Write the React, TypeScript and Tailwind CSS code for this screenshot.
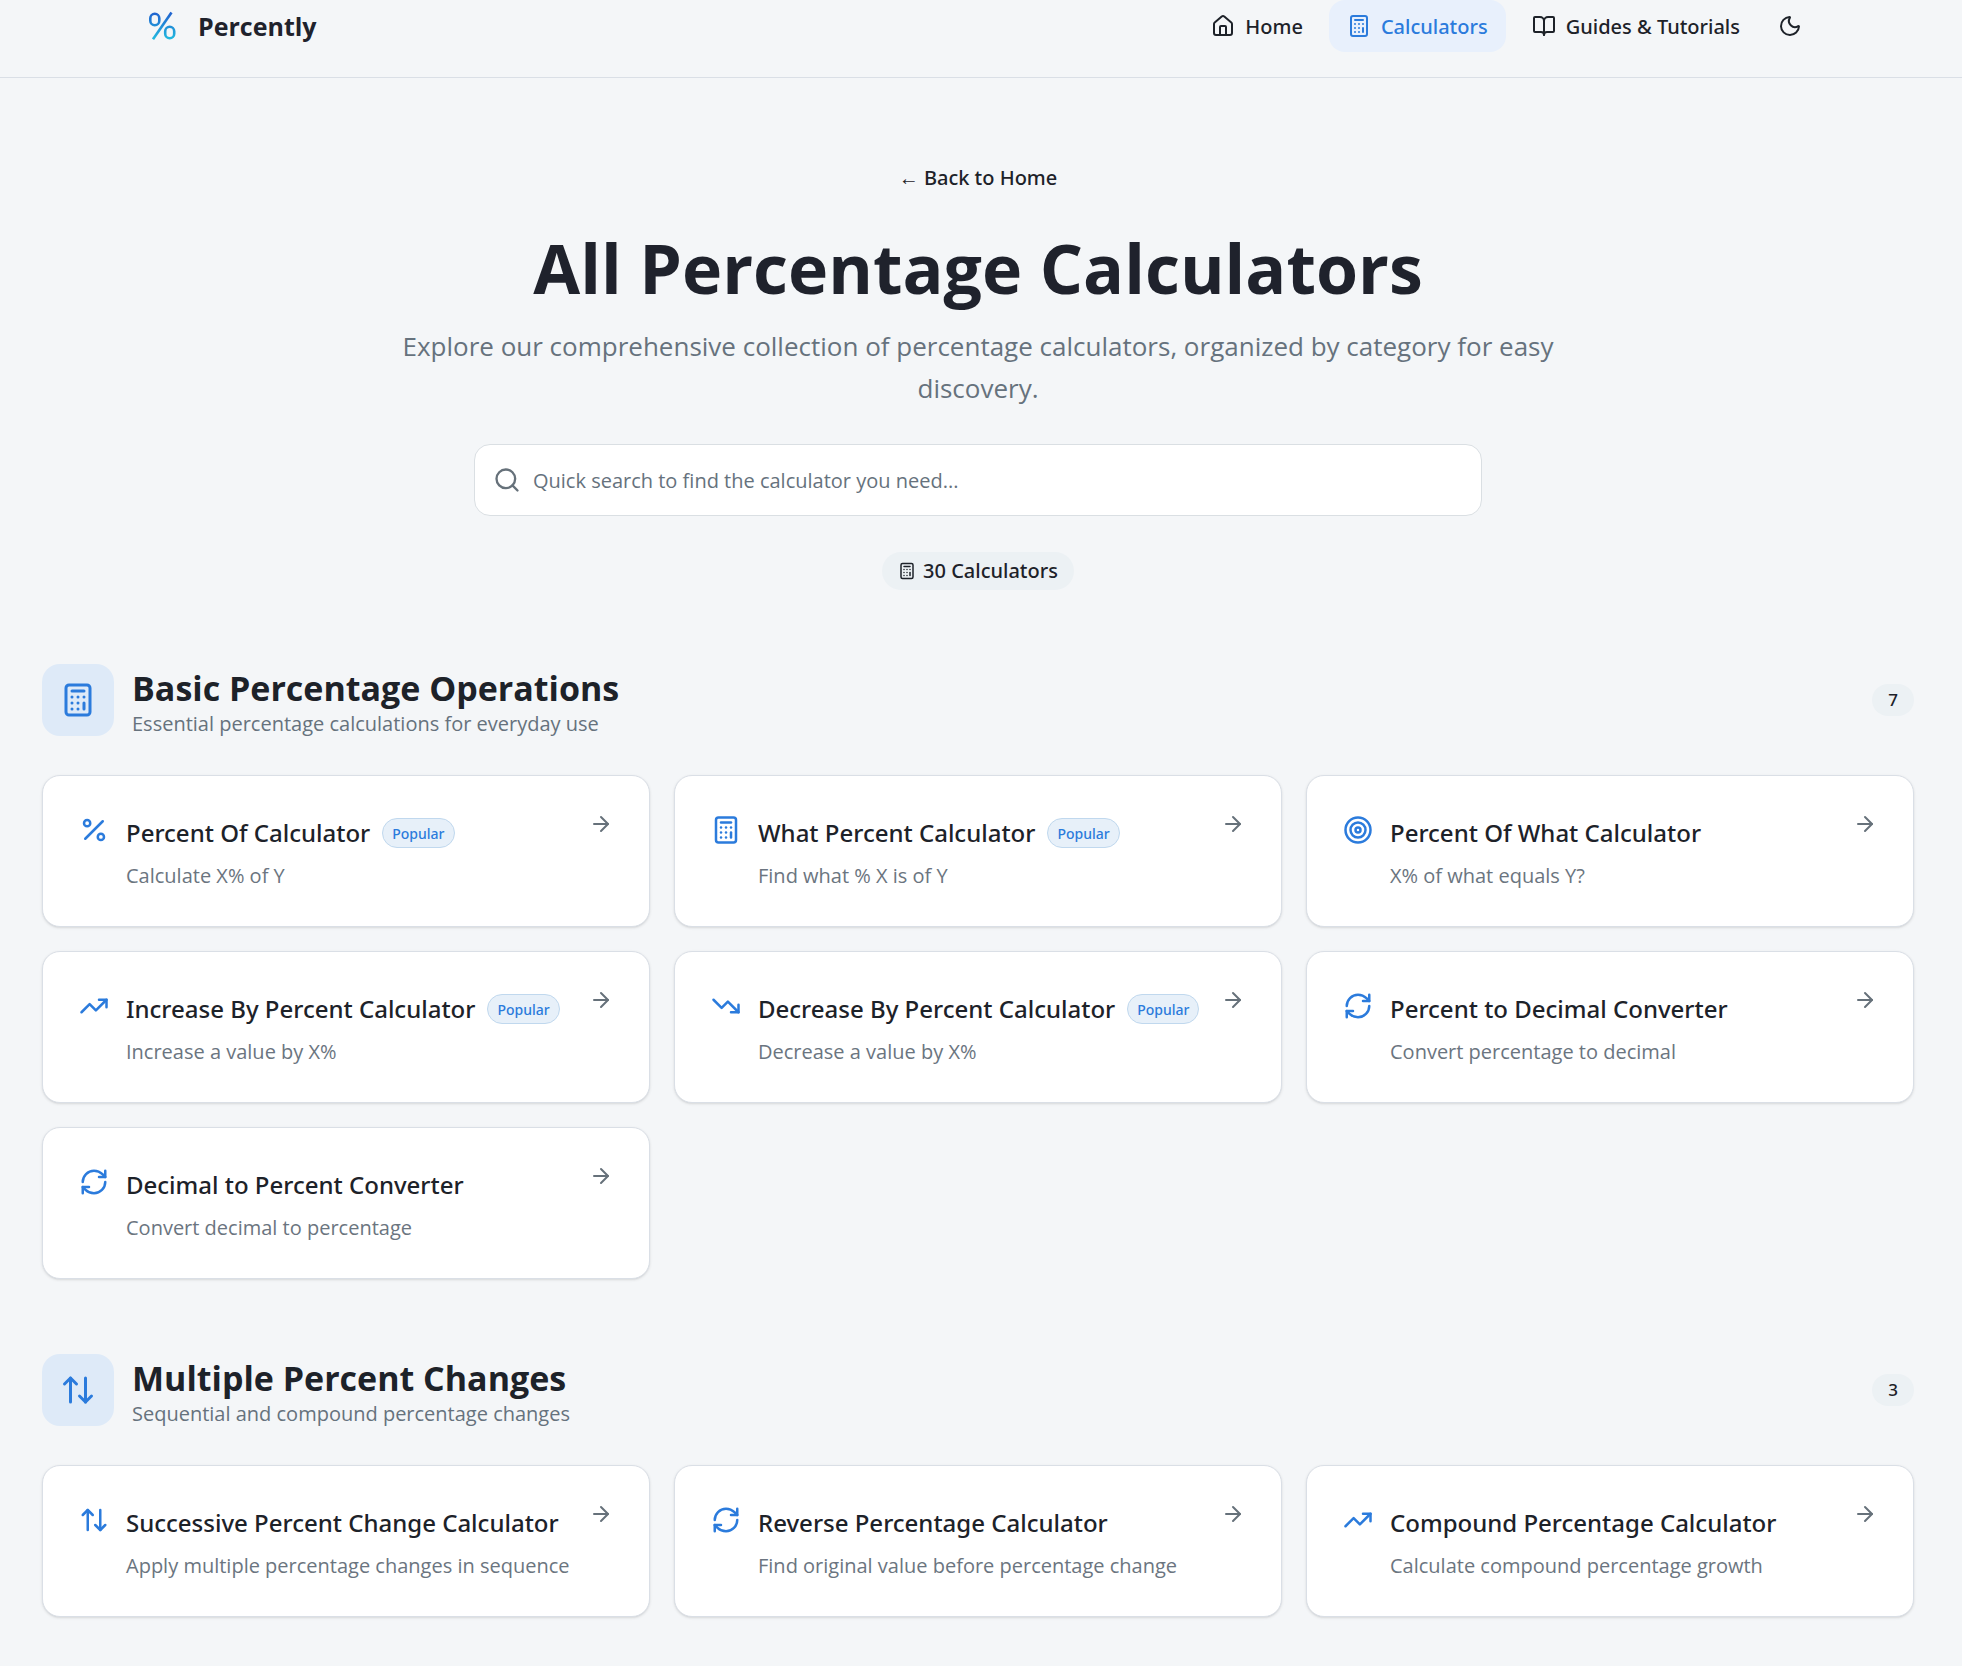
import {
    ArrowRight,
    ArrowUpDown,
    BookOpen,
    Calculator,
    House,
    Moon,
    Percent,
    RefreshCw,
    Search,
    Target,
    TrendingDown,
    TrendingUp,
    type LucideIcon,
} from 'lucide-react';

type Tool = {
    title: string;
    description: string;
    icon: LucideIcon;
    popular?: boolean;
};

type Category = {
    title: string;
    description: string;
    icon: LucideIcon;
    tools: Tool[];
};

const categories: Category[] = [
    {
        title: 'Basic Percentage Operations',
        description: 'Essential percentage calculations for everyday use',
        icon: Calculator,
        tools: [
            { title: 'Percent Of Calculator', description: 'Calculate X% of Y', icon: Percent, popular: true },
            { title: 'What Percent Calculator', description: 'Find what % X is of Y', icon: Calculator, popular: true },
            { title: 'Percent Of What Calculator', description: 'X% of what equals Y?', icon: Target },
            { title: 'Increase By Percent Calculator', description: 'Increase a value by X%', icon: TrendingUp, popular: true },
            { title: 'Decrease By Percent Calculator', description: 'Decrease a value by X%', icon: TrendingDown, popular: true },
            { title: 'Percent to Decimal Converter', description: 'Convert percentage to decimal', icon: RefreshCw },
            { title: 'Decimal to Percent Converter', description: 'Convert decimal to percentage', icon: RefreshCw },
        ],
    },
    {
        title: 'Multiple Percent Changes',
        description: 'Sequential and compound percentage changes',
        icon: ArrowUpDown,
        tools: [
            { title: 'Successive Percent Change Calculator', description: 'Apply multiple percentage changes in sequence', icon: ArrowUpDown },
            { title: 'Reverse Percentage Calculator', description: 'Find original value before percentage change', icon: RefreshCw },
            { title: 'Compound Percentage Calculator', description: 'Calculate compound percentage growth', icon: TrendingUp },
        ],
    },
];

const navItems = [
    { label: 'Home', icon: House, active: false },
    { label: 'Calculators', icon: Calculator, active: true },
    { label: 'Guides & Tutorials', icon: BookOpen, active: false },
];

function Logo() {
    return (
        <svg viewBox="0 0 40 40" className="h-10 w-10" fill="none" strokeWidth="2.6" strokeLinecap="butt">
            <defs>
                <linearGradient id="logo" x1="0" y1="6" x2="0" y2="34" gradientUnits="userSpaceOnUse">
                    <stop offset="0" stopColor="#2160cf" />
                    <stop offset="1" stopColor="#22bde0" />
                </linearGradient>
            </defs>
            <g stroke="url(#logo)">
                <rect x="8.3" y="7.8" width="9" height="11.4" rx="4.5" />
                <rect x="23.2" y="20.8" width="9" height="11.4" rx="4.5" />
                <path d="M29.5 6.5 11 33.2" />
            </g>
        </svg>
    );
}

function Header() {
    return (
        <header className="border-b border-[#dadfe6] pr-[6px] pb-[25px]">
            <div className="mx-auto flex max-w-[1672px] items-center justify-between">
                <a href="#" className="flex items-center gap-4">
                    <Logo />
                    <span className="pt-[2px] text-[25px] font-bold text-[#1f222c]">Percently</span>
                </a>

                <nav className="flex items-center gap-2 font-['Noto_Sans',sans-serif]">
                    {navItems.map(({ label, icon: Icon, active }) => (
                        <a
                            key={label}
                            href="#"
                            className={
                                active
                                    ? 'flex h-[52px] items-center gap-[10px] rounded-2xl bg-[#e8f0fc] px-[18px] text-[20px] font-medium text-[#2b7bdc]'
                                    : 'flex h-[52px] items-center gap-[10px] rounded-2xl px-[18px] text-[20px] font-medium text-[#1d2229]'
                            }
                        >
                            <Icon className="size-6" />
                            <span className="pt-[2px]">{label}</span>
                        </a>
                    ))}
                    <button type="button" aria-label="Toggle theme" className="flex size-12 items-center justify-center text-[#1d2229]">
                        <Moon className="size-6" />
                    </button>
                </nav>
            </div>
        </header>
    );
}

function Hero() {
    return (
        <section className="flex flex-col items-center text-center">
            <a href="#" className="font-['Noto_Sans',sans-serif] text-[20px] leading-[30px] font-medium">
                ← Back to Home
            </a>
            <h1 className="mt-[30px] text-[68px] leading-[90px] font-bold text-[#1f222c]">All Percentage Calculators</h1>
            <p className="mt-3 max-w-[1152px] text-[26px] leading-[42px] text-[#66727d]">
                Explore our comprehensive collection of percentage calculators, organized by category for easy discovery.
            </p>
            <label className="mt-[35px] flex h-[72px] w-full max-w-[1008px] items-center gap-3 rounded-2xl border border-[#dadfe3] bg-white px-[18px]">
                <Search className="size-7 text-[#66717a]" />
                <input
                    type="search"
                    aria-label="Search calculators"
                    placeholder="Quick search to find the calculator you need..."
                    className="min-w-0 flex-1 bg-transparent pt-[2px] text-[20px] outline-none placeholder:text-[#66727d]"
                />
            </label>
            <div className="mt-9 flex h-[38px] items-center gap-[7px] rounded-full bg-[#ecf1f4] px-4 font-['Noto_Sans',sans-serif] text-[20px] font-medium">
                <Calculator className="size-[18px]" />
                30 Calculators
            </div>
        </section>
    );
}

function ToolCard({ tool }: { tool: Tool }) {
    const Icon = tool.icon;

    return (
        <a href="#" className="flex items-start gap-[17px] rounded-[18px] border border-[#dadfe6] bg-white p-9 shadow-sm">
            <Icon className="mt-[3px] size-[30px] shrink-0 text-[#2b7bdc]" />
            <div className="min-w-0 flex-1">
                <div className="flex items-center gap-3 font-['Noto_Sans',sans-serif] font-medium">
                    <h3 className="text-[24px] leading-[42px] whitespace-nowrap">{tool.title}</h3>
                    {tool.popular && (
                        <span className="flex h-[30px] items-center rounded-full border border-[#c0d8ee] bg-[#e7f0f9] px-[9px] text-[14px] text-[#2b7bdc]">
                            Popular
                        </span>
                    )}
                </div>
                <p className="mt-2 text-[20px] leading-[28px] whitespace-nowrap text-[#6b7580]">{tool.description}</p>
            </div>
            <ArrowRight className="size-6 shrink-0 text-[#66717a]" />
        </a>
    );
}

function CategorySection({ category }: { category: Category }) {
    const Icon = category.icon;

    return (
        <section>
            <div className="flex items-center gap-[18px]">
                <div className="flex size-[72px] items-center justify-center rounded-[18px] bg-[#deeaf8] text-[#2b7bdc]">
                    <Icon className="size-9" />
                </div>
                <div className="flex-1">
                    <h2 className="text-[34px] leading-[48px] font-bold">{category.title}</h2>
                    <p className="text-[20px] leading-[24px] text-[#66727d]">{category.description}</p>
                </div>
                <span className="flex h-8 items-center rounded-full bg-[#ecf1f4] px-4 font-['Noto_Sans',sans-serif] text-[17px] font-medium">
                    {category.tools.length}
                </span>
            </div>
            <div className="mt-[39px] grid grid-cols-3 gap-6">
                {category.tools.map((tool) => (
                    <ToolCard key={tool.title} tool={tool} />
                ))}
            </div>
        </section>
    );
}

export default function App() {
    return (
        <div className="min-h-screen bg-[#f4f6f8] font-['Open_Sans','Noto_Sans',sans-serif] text-[#1d2229]">
            <Header />
            <main className="pt-[85px] pr-12 pb-12 pl-[42px]">
                <Hero />
                <div className="mt-[74px] flex flex-col gap-[75px]">
                    {categories.map((category) => (
                        <CategorySection key={category.title} category={category} />
                    ))}
                </div>
            </main>
        </div>
    );
}
